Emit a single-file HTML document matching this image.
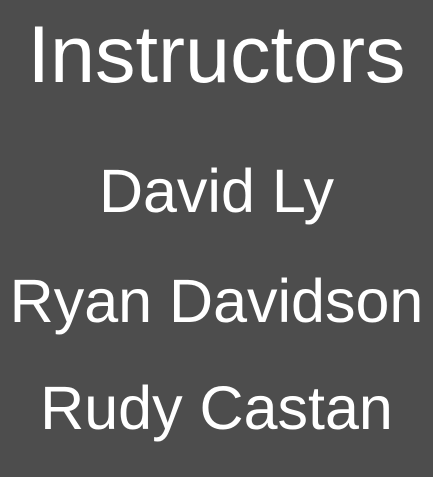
<!DOCTYPE html>
<html><head><meta charset="utf-8"><style>
html,body{margin:0;padding:0;}
body{width:433px;height:477px;background:#4d4d4d;position:relative;overflow:hidden;font-family:"Liberation Sans",Arial,sans-serif;color:#fff;}
div{position:absolute;left:0;width:433px;text-align:center;white-space:nowrap;}
.h{font-size:81px;line-height:81px;top:15px;}
.n{font-size:61px;line-height:61px;}
</style></head><body>
<div class="h">Instructors</div>
<div class="n" style="top:161px">David Ly</div>
<div class="n" style="top:271px">Ryan Davidson</div>
<div class="n" style="top:378px">Rudy Castan</div>
</body></html>
